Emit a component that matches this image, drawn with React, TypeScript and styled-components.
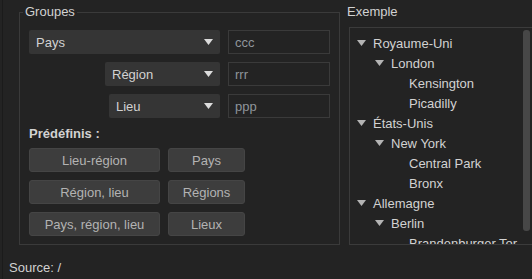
import React from 'react';
import styled, { createGlobalStyle } from 'styled-components';

const Global = createGlobalStyle`
  html, body { margin: 0; padding: 0; background: #232323; }
  body {
    font-family: "Liberation Sans", Arial, sans-serif;
    font-size: 13px;
    color: #d2d2d2;
  }
`;

const Window = styled.div`
  width: 532px;
  height: 279px;
  box-sizing: border-box;
  display: flex;
  flex-direction: column;
  overflow: hidden;
  padding-left: 2px;
`;

const Frame = styled.div`
  flex: 1;
  display: flex;
  flex-direction: column;
  border-left: 1px solid #1b1b1b;
`;

const Main = styled.div`
  height: 245px;
  flex: none;
  display: flex;
  align-items: flex-start;
  gap: 7px;
  padding-left: 16px;
`;

const Group = styled.fieldset`
  margin: 5px 0 0 0;
  width: 321px;
  height: 240px;
  box-sizing: border-box;
  border: 1px solid #3a3a3a;
  padding: 11px 9px 0 9px;
  min-inline-size: 0;
  display: flex;
  flex-direction: column;
`;

const Legend = styled.legend`
  padding: 0 2px;
  margin-left: -6px;
  line-height: 14px;
  color: #d2d2d2;
`;

const Rows = styled.div`
  display: flex;
  flex-direction: column;
  gap: 8px;
`;

const Row = styled.div<{ $indent: number }>`
  display: grid;
  grid-template-columns: 1fr 102px;
  gap: 8px;
  height: 24px;
  padding-left: ${(p) => p.$indent}px;
`;

const Combo = styled.div`
  display: flex;
  align-items: center;
  justify-content: space-between;
  background: #353535;
  border-radius: 2px;
  padding: 0 7px 0 7px;
  color: #d2d2d2;
`;

const Field = styled.div`
  display: flex;
  align-items: center;
  border: 1px solid #3a3a3a;
  padding-left: 6px;
  color: #8f959b;
`;

const Heading = styled.div`
  font-weight: bold;
  line-height: 15px;
  margin-top: 8px;
  color: #d2d2d2;
`;

const Presets = styled.div`
  display: grid;
  grid-template-columns: 131px 77px;
  grid-auto-rows: 24px;
  gap: 8px;
  margin-top: 7px;
`;

const PresetButton = styled.div`
  display: flex;
  align-items: center;
  justify-content: center;
  box-sizing: border-box;
  background: #3d3d3d;
  border: 1px solid #454545;
  border-radius: 3px;
  color: #b3b3b3;
`;

const Panel = styled.div`
  flex: 1;
  align-self: stretch;
  display: flex;
  flex-direction: column;
  padding-top: 5px;
  min-width: 0;
`;

const PanelLabel = styled.div`
  line-height: 14px;
  color: #d2d2d2;
`;

const TreeBox = styled.div`
  flex: 1;
  margin: 8px 0 0 2px;
  border: 1px solid #3b3b3b;
  border-right: none;
  display: flex;
  min-height: 0;
`;

const TreeList = styled.div`
  flex: 1;
  overflow: hidden;
  padding-top: 5px;
`;

const TreeItem = styled.div<{ $level: number }>`
  display: flex;
  align-items: center;
  height: 20px;
  padding-left: ${(p) => 7 + p.$level * 18}px;
  white-space: nowrap;
  color: #d2d2d2;
`;

const Toggle = styled.span`
  width: 16px;
  flex: none;
  display: flex;
  align-items: center;
`;

const ScrollTrack = styled.div`
  width: 9px;
  padding: 2px 2px 13px 0;
  box-sizing: border-box;
  display: flex;
`;

const ScrollThumb = styled.div`
  flex: 1;
  background: #474747;
  border-radius: 3px;
`;

const Footer = styled.div`
  margin-top: 15px;
  padding-left: 6px;
  line-height: 15px;
  color: #d2d2d2;
`;

const Caret = ({ color }: { color: string }) => (
  <svg width="9" height="6" viewBox="0 0 9 6">
    <polygon points="0,0 9,0 4.5,6" fill={color} />
  </svg>
);

const combos = [
  { label: 'Pays', value: 'ccc', indent: 0 },
  { label: 'Région', value: 'rrr', indent: 76 },
  { label: 'Lieu', value: 'ppp', indent: 80 },
];

const presets = ['Lieu-région', 'Pays', 'Région, lieu', 'Régions', 'Pays, région, lieu', 'Lieux'];

const tree: { label: string; level: number; open?: boolean }[] = [
  { label: 'Royaume-Uni', level: 0, open: true },
  { label: 'London', level: 1, open: true },
  { label: 'Kensington', level: 2 },
  { label: 'Picadilly', level: 2 },
  { label: 'États-Unis', level: 0, open: true },
  { label: 'New York', level: 1, open: true },
  { label: 'Central Park', level: 2 },
  { label: 'Bronx', level: 2 },
  { label: 'Allemagne', level: 0, open: true },
  { label: 'Berlin', level: 1, open: true },
  { label: 'Brandenburger Tor', level: 2 },
];

export default function App() {
  return (
    <>
      <Global />
      <Window>
        <Frame>
          <Main>
            <Group>
              <Legend>Groupes</Legend>
              <Rows>
                {combos.map((c) => (
                  <Row key={c.label} $indent={c.indent}>
                    <Combo>
                      <span>{c.label}</span>
                      <Caret color="#dcdcdc" />
                    </Combo>
                    <Field>{c.value}</Field>
                  </Row>
                ))}
              </Rows>
              <Heading>Prédéfinis :</Heading>
              <Presets>
                {presets.map((p) => (
                  <PresetButton key={p}>{p}</PresetButton>
                ))}
              </Presets>
            </Group>
            <Panel>
              <PanelLabel>Exemple</PanelLabel>
              <TreeBox>
                <TreeList>
                  {tree.map((t) => (
                    <TreeItem key={t.label} $level={t.level}>
                      <Toggle>{t.open ? <Caret color="#b4b4b4" /> : null}</Toggle>
                      {t.label}
                    </TreeItem>
                  ))}
                </TreeList>
                <ScrollTrack>
                  <ScrollThumb />
                </ScrollTrack>
              </TreeBox>
            </Panel>
          </Main>
          <Footer>Source: /</Footer>
        </Frame>
      </Window>
    </>
  );
}
